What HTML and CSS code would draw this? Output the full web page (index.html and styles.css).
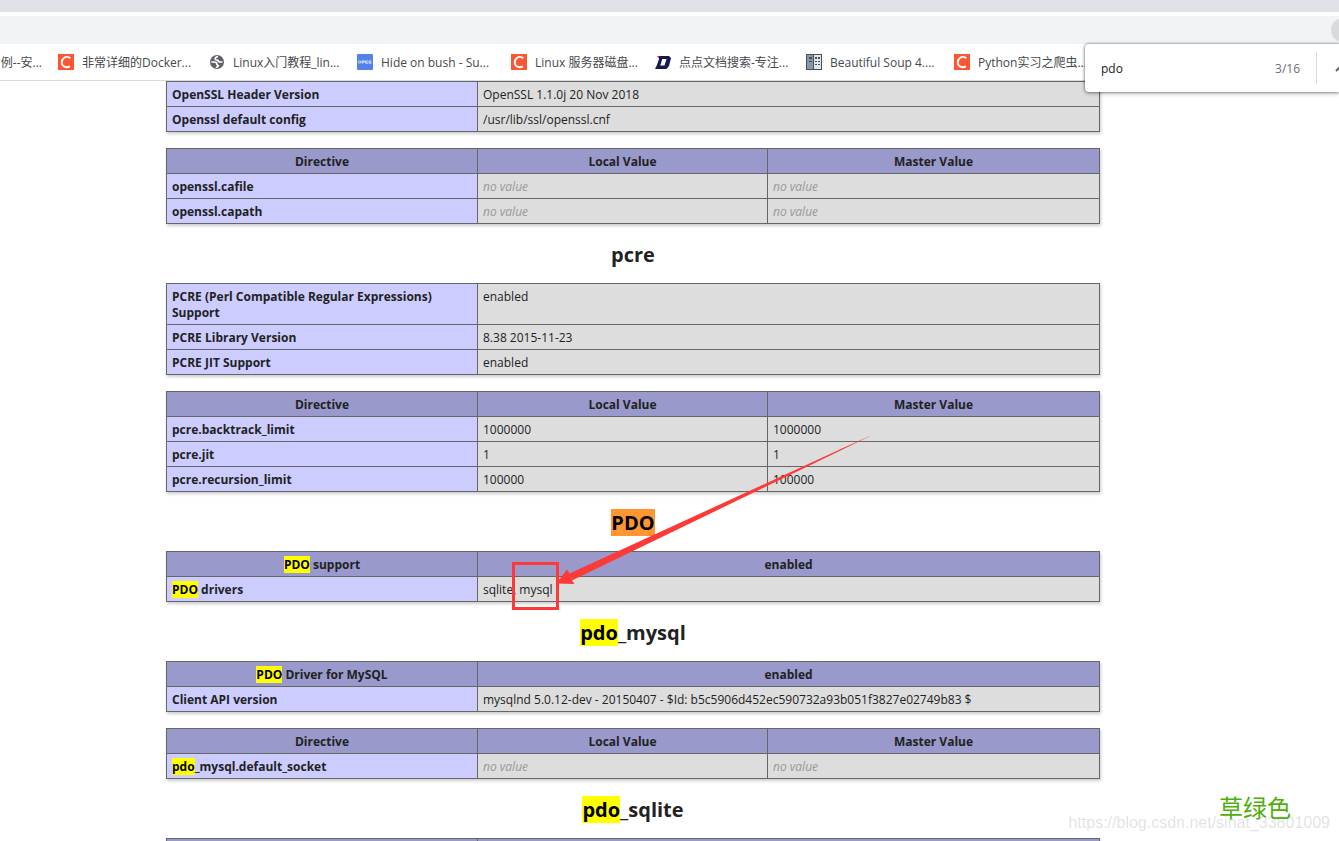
FILE: index.html
```html
<!DOCTYPE html>
<html lang="zh-CN">
<head>
<meta charset="utf-8">
<title>phpinfo()</title>
<link rel="stylesheet" href="styles.css">
</head>
<body>
<div class="window">
  <header class="chrome">
    <div class="tabstrip"></div>
    <div class="toolbar"><span class="avatar"></span></div>
    <nav class="bookmarks" aria-label="Bookmarks">
      <a class="bookmark bookmark-cut" href="#"><span>例--安...</span></a>
      <a class="bookmark" href="#">
        <svg class="favicon" viewBox="0 0 16 16"><rect width="16" height="16" fill="#fc5531"/><path d="M12.300 4.200C10.500 2.600 7.600 2.500 5.700 4.200C3.100 6.500 3.200 10.400 5.400 12.100C7.200 13.500 10 13.300 11.900 12.300" fill="none" stroke="#fff" stroke-width="1.900"/></svg>
        <span>非常详细的Docker...</span></a>
      <a class="bookmark" href="#">
        <svg class="favicon" viewBox="0 0 16 16"><circle cx="8" cy="8" r="7" fill="#5f6368"/><path d="M9 2.500C6.500 3 5.500 4.500 6.500 5.500C7.500 6.500 9 5.500 9.300 7C9.500 8.300 11 8 13.500 8" fill="none" stroke="#fff" stroke-width="1.700"/><path d="M2.300 8H5C7 8 7.800 9 7.800 10C7.800 11.500 9.800 11 9.300 12C9 13 8 13.300 6.800 13.500" fill="none" stroke="#fff" stroke-width="1.700"/></svg>
        <span>Linux入门教程_lin...</span></a>
      <a class="bookmark" href="#">
        <svg class="favicon" viewBox="0 0 16 16"><rect width="16" height="16" rx="1" fill="#5383e8"/><g fill="none" stroke="#dfe8fb" stroke-width="1"><rect x="1.500" y="6.800" width="2.300" height="2.400" rx="1"/><path d="M5.200 9.700V6.900H7.200V8.300H5.500M10.700 6.900H8.600V9.200H10.600V8.100M14.200 6.900H12.100V9.200H14.100V8.100"/></g></svg>
        <span>Hide on bush - Su...</span></a>
      <a class="bookmark" href="#">
        <svg class="favicon" viewBox="0 0 16 16"><rect width="16" height="16" fill="#fc5531"/><path d="M12.300 4.200C10.500 2.600 7.600 2.500 5.700 4.200C3.100 6.500 3.200 10.400 5.400 12.100C7.200 13.500 10 13.300 11.900 12.300" fill="none" stroke="#fff" stroke-width="1.900"/></svg>
        <span>Linux 服务器磁盘...</span></a>
      <a class="bookmark" href="#">
        <svg class="favicon" viewBox="0 0 16 16"><path d="M3.500 2H14L16 4L14 12L11.500 15H0L2 11L4 5Z" fill="#17194f"/><path d="M7.300 5H11.500L9.500 11.500H5.300Z" fill="#fff"/><path d="M2 2H4.200L3.600 4H3Z" fill="#f0384c"/></svg>
        <span>点点文档搜索-专注...</span></a>
      <a class="bookmark" href="#">
        <svg class="favicon" viewBox="0 0 16 16"><path d="M0 0H16V16H0Z" fill="#44515c"/><path d="M1 1H7V15H1Z" fill="#8799a8"/><path d="M8 1H15V15H8Z" fill="#e3e7ea"/><path d="M3 3H6V5H3ZM3 7H6V8H3ZM9 3H11V5H9ZM12 3H14V5H12ZM9 7H11V8H9ZM12 7H14V8H12ZM9 10H11V11H9ZM12 10H14V11H12Z" fill="#44515c"/></svg>
        <span>Beautiful Soup 4....</span></a>
      <a class="bookmark" href="#">
        <svg class="favicon" viewBox="0 0 16 16"><rect width="16" height="16" fill="#fc5531"/><path d="M12.300 4.200C10.500 2.600 7.600 2.500 5.700 4.200C3.100 6.500 3.200 10.400 5.400 12.100C7.200 13.500 10 13.300 11.900 12.300" fill="none" stroke="#fff" stroke-width="1.900"/></svg>
        <span>Python实习之爬虫...</span></a>
    </nav>
  </header>

  <form class="findbar">
    <input class="find-input" type="text" value="pdo" aria-label="Find in page">
    <span class="find-count">3/16</span>
    <button class="find-prev" type="button" aria-label="Previous">
      <svg viewBox="0 0 12 8"><path d="M1 7L6 2L11 7" fill="none" stroke="#5f6368" stroke-width="2"/></svg>
    </button>
  </form>

  <main class="page">
    <div class="info">
      <table>
        <tr><td class="e">OpenSSL Header Version</td><td class="v">OpenSSL 1.1.0j 20 Nov 2018</td></tr>
        <tr><td class="e">Openssl default config</td><td class="v">/usr/lib/ssl/openssl.cnf</td></tr>
      </table>
      <table>
        <tr class="h"><th class="c1">Directive</th><th class="c2">Local Value</th><th>Master Value</th></tr>
        <tr><td class="e">openssl.cafile</td><td class="v"><i>no value</i></td><td class="v"><i>no value</i></td></tr>
        <tr><td class="e">openssl.capath</td><td class="v"><i>no value</i></td><td class="v"><i>no value</i></td></tr>
      </table>

      <h2>pcre</h2>
      <table>
        <tr><td class="e">PCRE (Perl Compatible Regular Expressions) Support</td><td class="v">enabled</td></tr>
        <tr><td class="e">PCRE Library Version</td><td class="v">8.38 2015-11-23</td></tr>
        <tr><td class="e">PCRE JIT Support</td><td class="v">enabled</td></tr>
      </table>
      <table>
        <tr class="h"><th class="c1">Directive</th><th class="c2">Local Value</th><th>Master Value</th></tr>
        <tr><td class="e">pcre.backtrack_limit</td><td class="v">1000000</td><td class="v">1000000</td></tr>
        <tr><td class="e">pcre.jit</td><td class="v">1</td><td class="v">1</td></tr>
        <tr><td class="e">pcre.recursion_limit</td><td class="v">100000</td><td class="v">100000</td></tr>
      </table>

      <h2><mark class="current">PDO</mark></h2>
      <table>
        <tr class="h"><th class="c1"><mark>PDO</mark> support</th><th>enabled</th></tr>
        <tr><td class="e"><mark>PDO</mark> drivers</td><td class="v">sqlite, mysql</td></tr>
      </table>

      <h2><mark>pdo</mark>_mysql</h2>
      <table>
        <tr class="h"><th class="c1"><mark>PDO</mark> Driver for MySQL</th><th>enabled</th></tr>
        <tr><td class="e">Client API version</td><td class="v">mysqlnd 5.0.12-dev - 20150407 - $Id: b5c5906d452ec590732a93b051f3827e02749b83 $</td></tr>
      </table>
      <table>
        <tr class="h"><th class="c1">Directive</th><th class="c2">Local Value</th><th>Master Value</th></tr>
        <tr><td class="e"><mark>pdo</mark>_mysql.default_socket</td><td class="v"><i>no value</i></td><td class="v"><i>no value</i></td></tr>
      </table>

      <h2><mark>pdo</mark>_sqlite</h2>
      <table>
        <tr class="h"><th class="c1"></th><th></th></tr>
      </table>

      <svg class="annotation" viewBox="0 0 934 760" aria-hidden="true">
        <defs><linearGradient id="tail" gradientUnits="userSpaceOnUse" x1="680" y1="367" x2="704" y2="355"><stop offset="0" stop-color="#fd3a38"/><stop offset="1" stop-color="#fd3a38" stop-opacity="0.400"/></linearGradient></defs>
        <rect x="347.500" y="482.500" width="44" height="45" fill="none" stroke="#fd3a38" stroke-width="3"/>
        <path d="M390 502.500L401 488.500L403.500 492.500L703.700 354.700L704 355.300L406 499.500L408.500 503Z" fill="url(#tail)"/>
      </svg>
    </div>
  </main>

  <div class="color-name">草绿色</div>
  <div class="watermark">https://blog.csdn.net/sinat_33801009</div>
</div>
</body>
</html>
```
FILE: styles.css
```css
* { box-sizing: border-box; }

body {
  margin: 0;
  background: #fff;
  color: #222;
  font-family: "Open Sans", "Noto Sans CJK SC", sans-serif;
  font-size: 12px;
  line-height: 16px;
}

.window {
  position: relative;
  height: 100vh;
  overflow: hidden;
}

/* Browser frame */
.tabstrip {
  height: 12px;
  background: #dee1e6;
}

.toolbar {
  display: flex;
  justify-content: flex-end;
  align-items: center;
  height: 32px;
  border-top: 4px solid #fff;
  background: #f1f3f4;
  overflow: hidden;
}

.avatar {
  flex: none;
  width: 24px;
  height: 24px;
  margin-right: -16px;
  border-radius: 50%;
  background: #d8dade;
}

.bookmarks {
  display: grid;
  grid-template-columns: 42px 135px 132px 138px 128px 135px 132px 140px;
  column-gap: 16px;
  align-items: center;
  height: 37px;
  border-bottom: 1px solid #dadce0;
}

.bookmark {
  display: flex;
  align-items: center;
  gap: 8px;
  color: #45484c;
  text-decoration: none;
  white-space: nowrap;
}

.bookmark span { padding-top: 2px; }

.bookmark-cut { justify-content: flex-end; }

.favicon {
  flex: none;
  width: 16px;
  height: 16px;
}

.findbar {
  position: absolute;
  top: 44px;
  right: 0;
  z-index: 2;
  display: flex;
  align-items: center;
  width: 254px;
  height: 48px;
  padding-left: 16px;
  border-radius: 4px 0 0 4px;
  background: #fff;
  box-shadow: 0 0 3px rgba(0, 0, 0, 0.6), 0 2px 4px rgba(0, 0, 0, 0.2);
  overflow: hidden;
}

.find-input {
  flex: 1;
  min-width: 0;
  padding: 2px 0 0;
  border: 0;
  outline: 0;
  color: #202124;
  font: inherit;
}

.find-count {
  padding: 2px 16px 0 0;
  color: #6b6e72;
}

.find-prev {
  flex: none;
  width: 23px;
  height: 32px;
  padding: 0 0 0 18px;
  border: 0;
  border-left: 1px solid #dadce0;
  background: none;
  overflow: hidden;
}

.find-prev svg {
  display: block;
  width: 12px;
  height: 8px;
}

/* phpinfo document */
.page { padding-right: 73px; }

.info {
  position: relative;
  max-width: 934px;
  margin: 0 auto;
}

table {
  width: 100%;
  margin-bottom: 16px;
  border-collapse: collapse;
  table-layout: fixed;
  box-shadow: 1px 2px 3px #ccc;
}

th, td {
  padding: 5px 5px 3px;
  border: 1px solid #666;
  height: 25px;
  vertical-align: baseline;
}

th { font-weight: 700; text-align: center; }
.c1, .e { width: 311px; }
.c2 { width: 290px; }
.h { background: #99c; }
.e { background: #ccf; font-weight: 700; }
.v { background: #ddd; }
.v i { color: #999; }

h2 {
  margin: 16px 0;
  padding-top: 2px;
  font-size: 20px;
  line-height: 25px;
  font-weight: 700;
  text-align: center;
}

mark { background: #ff0; color: #000; }
mark.current { background: #ff9632; }

.annotation {
  position: absolute;
  top: 0;
  left: 0;
  width: 934px;
  height: 760px;
}

.color-name {
  position: absolute;
  right: 48px;
  bottom: 18px;
  color: #4eaf0a;
  font-family: "Noto Sans CJK SC", sans-serif;
  font-size: 24px;
  line-height: 32px;
}

.watermark {
  position: absolute;
  right: 9px;
  bottom: 8px;
  color: rgba(120, 120, 120, 0.22);
  font-family: "Liberation Sans", sans-serif;
  font-size: 16px;
  line-height: 20px;
}
```
